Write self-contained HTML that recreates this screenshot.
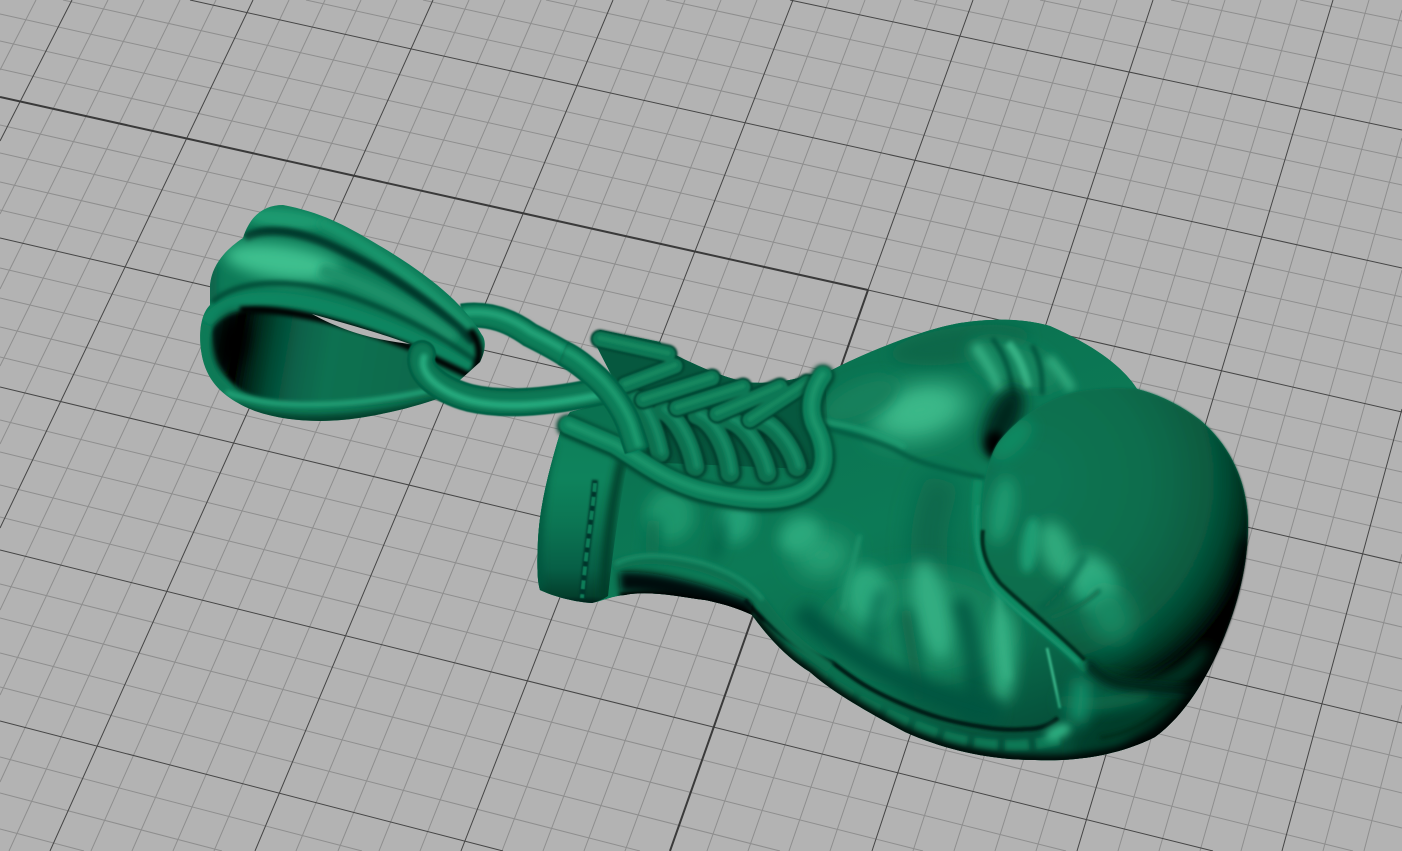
<!DOCTYPE html>
<html><head><meta charset="utf-8"><title>Boxing glove pendant</title>
<style>html,body{margin:0;padding:0;background:#b2b2b2;overflow:hidden;width:1402px;height:851px}svg{display:block}</style></head>
<body>
<svg xmlns="http://www.w3.org/2000/svg" width="1402" height="851" viewBox="0 0 1402 851">
<defs>
<filter id="b05" filterUnits="userSpaceOnUse" x="0" y="0" width="1402" height="851"><feGaussianBlur stdDeviation="0.6"/></filter>
<filter id="b1" filterUnits="userSpaceOnUse" x="0" y="0" width="1402" height="851"><feGaussianBlur stdDeviation="1"/></filter>
<filter id="b2" filterUnits="userSpaceOnUse" x="0" y="0" width="1402" height="851"><feGaussianBlur stdDeviation="2"/></filter>
<filter id="b4" filterUnits="userSpaceOnUse" x="0" y="0" width="1402" height="851"><feGaussianBlur stdDeviation="4"/></filter>
<filter id="b7" filterUnits="userSpaceOnUse" x="0" y="0" width="1402" height="851"><feGaussianBlur stdDeviation="7"/></filter>
<filter id="b12" filterUnits="userSpaceOnUse" x="0" y="0" width="1402" height="851"><feGaussianBlur stdDeviation="12"/></filter>
<path id="bodyP" d="M563 423 C552 460 540 500 538 540 C537 565 537 580 540 590 C555 597 575 602 592 603 C605 600 612 596 625 595 C650 590 680 597 705 600 C725 604 742 610 752 615 C770 640 790 660 810 672 C830 690 860 708 905 732 C945 750 990 760 1035 760 C1085 762 1125 752 1155 737 C1185 715 1207 678 1222 642 C1240 600 1248 560 1248 525 C1248 485 1232 447 1200 420 C1180 405 1160 395 1137 389 C1125 370 1100 348 1050 326 C1030 320 1000 317 960 323 C920 330 860 355 830 371 L823 370 C800 380 770 385 745 382 C715 375 690 362 665 350 L660 342 L600 330 L593 335 L597 347 L612 376 L600 388 L608 402 L570 412 Z"/>
<path id="thumbP" d="M1000 440 C1020 415 1050 398 1075 392 C1095 388 1120 387 1137 389 C1160 395 1180 405 1200 420 C1232 447 1248 485 1248 525 C1248 560 1240 600 1222 642 C1212 665 1202 680 1190 695 C1170 690 1150 690 1133 686 C1115 685 1100 680 1087 660 C1070 645 1055 625 1033 612 C1015 598 995 580 987 560 C980 540 980 510 985 480 C988 465 992 450 1000 440 Z"/>
<path id="cuffP" d="M563 423 C552 460 540 500 538 540 C537 565 537 580 540 590 C555 597 575 602 592 603 C600 601 605 598 608 596 C612 560 618 510 628 462 C610 445 585 432 563 423 Z"/>
<path id="bailP" d="M283 205 C265 205 250 215 243 238 C225 250 212 265 210 285 C210 295 210 300 210 305 C200 315 199 335 201 350 C205 380 222 398 255 411 C290 423 330 423 365 417 C395 412 420 405 440 398 L480 362 C486 350 486 340 482 335 C465 305 430 275 375 243 C345 225 320 212 283 205 Z"/>
<clipPath id="cBody"><use href="#bodyP"/></clipPath>
<clipPath id="cThumb"><use href="#thumbP"/></clipPath>
<clipPath id="cCuff"><use href="#cuffP"/></clipPath>
<clipPath id="cBail"><use href="#bailP"/></clipPath>
<radialGradient id="gThumb" gradientUnits="userSpaceOnUse" cx="1030" cy="480" r="240">
<stop offset="0" stop-color="#0a7654"/><stop offset=".5" stop-color="#096d4d"/><stop offset=".65" stop-color="#086345"/><stop offset=".75" stop-color="#075a3f"/><stop offset=".82" stop-color="#054a33"/><stop offset=".88" stop-color="#033523"/><stop offset=".93" stop-color="#011c13"/><stop offset=".98" stop-color="#000"/>
</radialGradient>
<linearGradient id="gBody" gradientUnits="userSpaceOnUse" x1="800" y1="340" x2="950" y2="760">
<stop offset="0" stop-color="#0a7150"/><stop offset=".45" stop-color="#0c7a56"/><stop offset=".8" stop-color="#0a6b4c"/><stop offset="1" stop-color="#05503a"/>
</linearGradient>
<linearGradient id="gCuff" gradientUnits="userSpaceOnUse" x1="0" y1="425" x2="0" y2="605">
<stop offset="0" stop-color="#0d7f5a"/><stop offset=".3" stop-color="#0e835c"/><stop offset=".55" stop-color="#0b7553"/><stop offset=".8" stop-color="#075f46"/><stop offset=".95" stop-color="#033f2c"/><stop offset="1" stop-color="#011"/>
</linearGradient>
<linearGradient id="gIn" gradientUnits="userSpaceOnUse" x1="218" y1="340" x2="420" y2="375">
<stop offset="0" stop-color="#021d14"/><stop offset=".1" stop-color="#000"/><stop offset=".18" stop-color="#02261a"/><stop offset=".28" stop-color="#054a34"/><stop offset=".4" stop-color="#08624a"/><stop offset=".55" stop-color="#0b7151"/><stop offset="1" stop-color="#0a6a4c"/>
</linearGradient>
<g id="arcs" fill="none" stroke-linecap="round">
<path d="M633 398 C645 405 655 430 660 453"/><path d="M663 410 C675 416 690 440 695 467"/><path d="M697 415 C712 420 727 445 730 473"/><path d="M730 420 C745 425 762 450 767 473"/><path d="M760 420 C775 425 792 447 797 467"/>
</g>
<g id="diag" fill="none" stroke-linecap="round">
<path d="M625 385 L675 366"/><path d="M643 400 L712 378"/><path d="M677 408 L743 387"/><path d="M717 414 L780 387"/><path d="M750 420 L807 383"/><path d="M600 339 L668 354"/>
</g>
<path id="strap" fill="none" stroke-linecap="round" d="M568 425 L615 445 C640 460 660 478 700 490 C740 500 780 505 805 490 C828 475 828 450 815 425 C808 408 812 390 823 375"/>
<path id="chU" fill="none" d="M462 316 C490 312 512 322 530 335 C550 345 575 358 597 378 C612 392 625 412 630 428 L637 450"/>
<path id="chL" fill="none" stroke-linecap="round" d="M422 354 C416 372 440 390 470 398 C500 405 540 404 602 391"/>
</defs>

<rect width="1402" height="851" fill="#b3b3b3"/>

<path fill="none" stroke="#8e8e8e" stroke-width="1" d="M1300 0L1402 21M1171 0L1402 48M1040 0L1402 76M914 0L1402 103M666 0L1402 158M546 0L1402 185M423 0L1402 213M306 0L1402 240M63 0L1402 297M0 14L1402 326M0 41L1402 354M0 69L1402 383M0 125L1402 442M0 153L1402 472M0 182L1402 503M0 210L1402 533M0 268L1402 595M0 298L1402 627M0 327L1402 659M0 357L1402 691M0 420L1402 758M0 452L1402 793M0 485L1402 828M0 517L1353 851M0 584L1066 851M0 618L923 851M0 653L780 851M0 687L640 851M0 757L362 851M0 793L222 851M0 829L84 851
M36 0L0 70M108 0L0 214M144 0L0 289M180 0L0 366M216 0L0 444M289 0L0 610M325 0L0 695M361 0L0 782M397 0L9 851M469 0L91 851M505 0L132 851M541 0L173 851M577 0L214 851M649 0L296 851M685 0L338 851M721 0L379 851M757 0L420 851M829 0L502 851M865 0L543 851M901 0L584 851M937 0L625 851M1009 0L707 851M1045 0L748 851M1081 0L789 851M1117 0L830 851M1189 0L913 851M1225 0L954 851M1261 0L995 851M1297 0L1036 851M1369 0L1118 851M1402 10L1159 851M1402 138L1200 851M1402 270L1241 851M1402 554L1323 851M1402 705L1364 851"/>
<path fill="none" stroke="#454545" stroke-width="1" d="M790 0L1402 130M190 0L1402 268M868 290L1402 412M0 238L1402 563M0 387L1402 723M0 550L1213 851M0 721L503 851
M72 0L0 141M253 0L0 528M433 0L50 851M613 0L255 851M793 0L461 851M973 0L868 290M1153 0L872 851M1333 0L1077 851M1402 409L1282 851"/>
<path fill="none" stroke="#3a3a3a" stroke-width="2" d="M0 97L868 290M868 290L670 851"/>

<!-- BODY -->
<use href="#bodyP" fill="#0a6e4e"/>
<g clip-path="url(#cBody)">
<rect x="530" y="310" width="730" height="460" fill="url(#gBody)"/>
<path d="M597 345 L665 350 L745 384 L825 375 L830 470 L640 462 Z" fill="#06583f"/>
<ellipse cx="920" cy="412" rx="52" ry="28" transform="rotate(-15 920 412)" fill="#38b385" filter="url(#b12)"/>
<ellipse cx="920" cy="410" rx="26" ry="14" transform="rotate(-15 920 410)" fill="#3ab888" filter="url(#b7)"/>
<ellipse cx="860" cy="400" rx="40" ry="18" transform="rotate(-25 860 400)" fill="#12805c" filter="url(#b7)"/>
<ellipse cx="960" cy="345" rx="70" ry="18" transform="rotate(-8 960 345)" fill="#096848" filter="url(#b7)"/>
<path d="M815 425 C840 432 880 440 905 455 C925 465 955 472 985 478" fill="none" stroke="#05553c" stroke-width="4" filter="url(#b2)"/>
<path d="M815 420 C845 425 880 432 905 447" fill="none" stroke="#1f9d72" stroke-width="4" filter="url(#b2)"/>
<ellipse cx="1015" cy="365" rx="50" ry="22" transform="rotate(20 1015 365)" fill="#12855f" filter="url(#b7)"/>
<path d="M975 345 C985 360 995 375 1000 392" fill="none" stroke="#35b083" stroke-width="9" filter="url(#b4)"/>
<path d="M1008 343 C1018 355 1025 370 1028 388" fill="none" stroke="#35b083" stroke-width="8" filter="url(#b2)"/>
<path d="M1048 358 C1055 365 1065 378 1072 390" fill="none" stroke="#2fa87b" stroke-width="10" filter="url(#b4)"/>
<path d="M992 338 C1003 352 1012 372 1014 400" fill="none" stroke="#05553c" stroke-width="5" filter="url(#b2)"/>
<path d="M1032 345 C1040 360 1043 375 1042 395" fill="none" stroke="#05553c" stroke-width="5" filter="url(#b2)"/>
<ellipse cx="1003" cy="420" rx="16" ry="36" transform="rotate(25 1003 420)" fill="#02281c" filter="url(#b7)"/>
<ellipse cx="995" cy="445" rx="10" ry="14" fill="#000" filter="url(#b4)"/>
<path d="M945 480 C930 510 925 540 932 590" fill="none" stroke="#09684b" stroke-width="36" filter="url(#b12)"/>
<ellipse cx="920" cy="625" rx="95" ry="55" fill="#14855f" filter="url(#b12)"/>
<ellipse cx="822" cy="555" rx="28" ry="22" fill="#26a074" filter="url(#b12)"/>
<ellipse cx="868" cy="595" rx="22" ry="30" transform="rotate(-12 868 595)" fill="#2ba87b" filter="url(#b7)"/>
<ellipse cx="932" cy="610" rx="17" ry="50" transform="rotate(-12 932 610)" fill="#32ad81" filter="url(#b7)"/>
<ellipse cx="1003" cy="655" rx="14" ry="48" fill="#2da87c" filter="url(#b7)"/>
<path d="M1000 585 C998 610 1002 650 1008 680" fill="none" stroke="#38b588" stroke-width="5" filter="url(#b4)"/>
<path d="M860 535 C855 555 848 585 843 610" fill="none" stroke="#22996f" stroke-width="3" filter="url(#b2)"/>
<path d="M884 590 C875 610 870 635 874 655" fill="none" stroke="#07604a" stroke-width="9" filter="url(#b7)"/>
<path d="M960 600 C975 640 975 690 972 720" fill="none" stroke="#06553f" stroke-width="14" filter="url(#b7)"/>
<path d="M905 610 C910 640 915 670 920 700" fill="none" stroke="#085f45" stroke-width="12" filter="url(#b7)"/>
<path d="M1047 648 C1052 670 1056 690 1060 708" fill="none" stroke="#3fc092" stroke-width="2.5" filter="url(#b1)"/>
<path d="M800 610 C840 650 900 690 1000 715" fill="none" stroke="#055540" stroke-width="22" filter="url(#b7)"/>
<ellipse cx="1135" cy="722" rx="70" ry="28" transform="rotate(-28 1135 722)" fill="#033d2a" filter="url(#b7)"/>
<path d="M1060 700 C1090 707 1120 703 1150 692" fill="none" stroke="#0a6e4e" stroke-width="13" filter="url(#b7)"/>
<path d="M1075 722 C1085 700 1078 690 1083 680" fill="none" stroke="#16906a" stroke-width="16" filter="url(#b7)"/>
<path d="M1100 738 C1125 735 1150 722 1175 700" fill="none" stroke="#022d1f" stroke-width="5" filter="url(#b2)"/>
<path d="M745 600 C770 630 800 650 833 663 C855 680 870 690 900 703 C930 716 950 722 983 727 C1000 730 1015 730 1027 729 C1040 729 1050 725 1058 718" fill="none" stroke="#011f16" stroke-width="4.5" filter="url(#b1)"/>
<path d="M760 625 C785 655 810 668 835 685 C865 705 900 722 950 738 C990 748 1030 748 1065 738" fill="none" stroke="#0c7855" stroke-width="11" stroke-dasharray="24 7" filter="url(#b2)"/>
<ellipse cx="1058" cy="732" rx="14" ry="7" transform="rotate(-25 1058 732)" fill="#2fae80" filter="url(#b4)"/>
<ellipse cx="670" cy="515" rx="24" ry="26" fill="#1a966c" filter="url(#b7)"/>
<ellipse cx="737" cy="522" rx="17" ry="22" transform="rotate(20 737 522)" fill="#22a077" filter="url(#b7)"/>
<ellipse cx="800" cy="535" rx="22" ry="18" transform="rotate(-30 800 535)" fill="#2aa87c" filter="url(#b7)"/>
<path d="M720 520 C724 535 718 548 712 558" fill="none" stroke="#075f45" stroke-width="9" filter="url(#b7)"/>
<path d="M655 520 C650 535 655 545 650 560" fill="none" stroke="#097050" stroke-width="14" filter="url(#b7)"/>
<path d="M620 582 C650 580 700 592 750 612" fill="none" stroke="#011" stroke-width="20" filter="url(#b4)"/>
<path d="M613 566 C635 556 665 556 703 567 C725 574 750 585 765 607 C785 635 805 650 830 668" fill="none" stroke="#0b6f4f" stroke-width="11" filter="url(#b2)"/>
<path d="M615 564 C635 553 665 553 703 563 C725 570 748 580 763 600" fill="none" stroke="#1f9a71" stroke-width="3" filter="url(#b2)"/>
<path d="M752 615 C770 640 790 660 810 672 C830 690 860 708 905 732 C945 750 990 760 1035 760 C1085 762 1125 752 1155 737 C1185 715 1207 678 1222 642" fill="none" stroke="#000" stroke-width="10" filter="url(#b4)"/>
<path d="M620 598 C660 590 705 602 752 615" fill="none" stroke="#000" stroke-width="10" filter="url(#b2)"/>
</g>

<!-- THUMB -->
<path d="M978 480 C972 530 980 565 995 585 C1020 610 1060 640 1087 670" fill="none" stroke="#0f8a62" stroke-width="9" filter="url(#b2)"/>
<g filter="url(#b1)"><use href="#thumbP" fill="url(#gThumb)"/></g>
<g clip-path="url(#cThumb)">
<ellipse cx="1002" cy="510" rx="12" ry="34" transform="rotate(10 1002 510)" fill="#1c9a70" filter="url(#b7)"/>
<ellipse cx="1012" cy="440" rx="12" ry="26" transform="rotate(45 1012 440)" fill="#118a62" filter="url(#b7)"/>
<ellipse cx="1030" cy="545" rx="9" ry="28" transform="rotate(8 1030 545)" fill="#1f9c72" filter="url(#b4)"/>
<ellipse cx="1057" cy="550" rx="16" ry="30" transform="rotate(-20 1057 550)" fill="#2da97c" filter="url(#b7)"/>
<ellipse cx="1093" cy="582" rx="22" ry="30" transform="rotate(-30 1093 582)" fill="#2fab7f" filter="url(#b7)"/>
<ellipse cx="1110" cy="615" rx="22" ry="28" transform="rotate(-25 1110 615)" fill="#188a64" filter="url(#b12)"/>
<path d="M1040 610 C1060 595 1075 575 1085 555" fill="none" stroke="#085f45" stroke-width="5" filter="url(#b4)"/>
<path d="M1050 618 C1070 612 1090 600 1100 590" fill="none" stroke="#0a6a4c" stroke-width="4" filter="url(#b2)"/>
<path d="M1100 680 C1130 695 1175 690 1210 650" fill="none" stroke="#023a28" stroke-width="16" filter="url(#b7)"/>
</g>
<path d="M983 530 C980 550 988 568 1000 583 C1020 603 1050 625 1085 660" fill="none" stroke="#022c1e" stroke-width="4" filter="url(#b1)"/>
<path d="M978 505 C973 540 980 565 992 586 C1010 608 1045 632 1078 662" fill="none" stroke="#16906a" stroke-width="3" filter="url(#b1)"/>
<g clip-path="url(#cBody)">
<path d="M1087 662 C1100 682 1120 688 1150 688 C1170 690 1185 692 1200 690" fill="none" stroke="#02281c" stroke-width="9" filter="url(#b4)"/>
<path d="M1248 540 C1240 600 1222 642 1205 675 C1190 705 1165 728 1130 750" fill="none" stroke="#000" stroke-width="12" filter="url(#b7)"/>
</g>

<!-- CUFF -->
<use href="#cuffP" fill="url(#gCuff)"/>
<g clip-path="url(#cCuff)">
<path d="M552 440 C540 490 535 550 540 590" fill="none" stroke="#05553c" stroke-width="8" filter="url(#b4)"/>
<path d="M622 460 C610 510 605 560 604 600" fill="none" stroke="#033a28" stroke-width="9" filter="url(#b4)"/>
</g>
<path d="M595 480 C593 510 586 550 582 598" fill="none" stroke="#02352a" stroke-width="6" filter="url(#b1)"/>
<path d="M595 483 C593 510 586 550 582 598" fill="none" stroke="#0e7d59" stroke-width="4" stroke-dasharray="9 5" filter="url(#b05)"/>

<!-- LACES -->
<g stroke="#012f20" stroke-width="23" filter="url(#b2)"><use href="#arcs"/></g>
<g stroke="#0a7050" stroke-width="19" filter="url(#b1)"><use href="#arcs"/></g>
<g stroke="#158c66" stroke-width="6" filter="url(#b2)" transform="translate(2 -1)"><use href="#arcs"/></g>
<g stroke="#03402d" stroke-width="19" filter="url(#b1)"><use href="#diag"/></g>
<g stroke="#0c7855" stroke-width="15" filter="url(#b1)"><use href="#diag"/></g>
<g stroke="#14875f" stroke-width="5" filter="url(#b1)" transform="translate(0 -1)"><use href="#diag"/></g>
<!-- strap -->
<g stroke="#03432f" stroke-width="23" filter="url(#b2)" transform="translate(0 1)"><use href="#strap"/></g>
<g stroke="#0d7f5a" stroke-width="18" filter="url(#b1)"><use href="#strap"/></g>
<g stroke="#1a966c" stroke-width="6" filter="url(#b2)" transform="translate(0 -1)"><use href="#strap"/></g>

<!-- upper chain -->
<g stroke="#045a40" stroke-width="25" filter="url(#b05)"><use href="#chU"/></g>
<g stroke="#0d7d59" stroke-width="20" filter="url(#b2)"><use href="#chU"/></g>
<g stroke="#22a277" stroke-width="7" filter="url(#b2)" transform="translate(1 -3)"><use href="#chU"/></g>

<!-- BAIL -->
<use href="#bailP" fill="#0d7a57"/>
<g clip-path="url(#cBail)">
<ellipse cx="285" cy="219" rx="40" ry="10" transform="rotate(6 285 219)" fill="#1a9a70" filter="url(#b4)"/>
<path d="M320 222 C360 240 420 280 470 330" fill="none" stroke="#1a9a70" stroke-width="10" filter="url(#b4)"/>
<path d="M245 238 C265 226 300 230 340 250 C380 268 430 300 474 342" fill="none" stroke="#02382a" stroke-width="9" filter="url(#b2)"/>
<ellipse cx="282" cy="262" rx="58" ry="17" transform="rotate(8 282 262)" fill="#3dbf8e" filter="url(#b7)"/>
<path d="M320 270 C360 282 410 305 455 340" fill="none" stroke="#1a9069" stroke-width="14" filter="url(#b4)"/>
<path d="M213 265 C212 280 212 290 213 300" fill="none" stroke="#07604a" stroke-width="9" filter="url(#b4)"/>
<path d="M212 302 C235 283 270 280 310 286 C350 293 420 320 480 364" fill="none" stroke="#044a34" stroke-width="5" filter="url(#b2)"/>
<path d="M206 322 C225 298 260 295 300 301 C340 307 420 335 475 374" fill="none" stroke="#0f8560" stroke-width="12" filter="url(#b2)"/>
<path d="M212 330 C225 308 265 304 305 312 C345 322 385 336 412 346 L440 395 C380 408 300 412 250 395 C225 385 213 360 212 330 Z" fill="url(#gIn)" filter="url(#b2)"/>
<path d="M240 310 C280 307 340 320 412 348 L470 376" fill="none" stroke="#000" stroke-width="7" filter="url(#b2)"/>
<ellipse cx="232" cy="342" rx="15" ry="28" transform="rotate(12 232 342)" fill="#000" filter="url(#b7)"/>
<path d="M207 325 C200 345 205 375 228 392" fill="none" stroke="#0d7a57" stroke-width="10" filter="url(#b2)"/>
<path d="M226 392 C265 408 340 410 432 390" fill="none" stroke="#22a277" stroke-width="5" filter="url(#b2)"/>
<path d="M235 408 C280 425 350 425 440 402" fill="none" stroke="#022c1f" stroke-width="8" filter="url(#b4)"/>
<path d="M470 330 C482 345 482 360 470 378" fill="none" stroke="#000" stroke-width="7" filter="url(#b2)"/>
</g>
<path d="M312 314 C340 322 380 333 410 344 C385 341 350 335 312 314 Z" fill="#b3b3b3"/>

<!-- lower chain -->
<g stroke="#045a40" stroke-width="28" filter="url(#b05)"><use href="#chL"/></g>
<g stroke="#0c7855" stroke-width="22" filter="url(#b2)"><use href="#chL"/></g>
<g stroke="#27aa7e" stroke-width="7" filter="url(#b2)" transform="translate(2 3)"><use href="#chL"/></g>
<!-- upper chain over tee -->
<path d="M563 353 C575 358 586 368 597 378 C612 392 625 412 630 428 L637 450" fill="none" stroke="#045a40" stroke-width="25" filter="url(#b05)"/>
<path d="M563 353 C575 358 586 368 597 378 C612 392 625 412 630 428 L637 450" fill="none" stroke="#0d7d59" stroke-width="20" filter="url(#b2)"/>
<path d="M564 350 C576 355 587 365 598 375 C613 389 626 409 632 425 L639 447" fill="none" stroke="#1d9b70" stroke-width="6" filter="url(#b2)"/>
</svg>
</body></html>
